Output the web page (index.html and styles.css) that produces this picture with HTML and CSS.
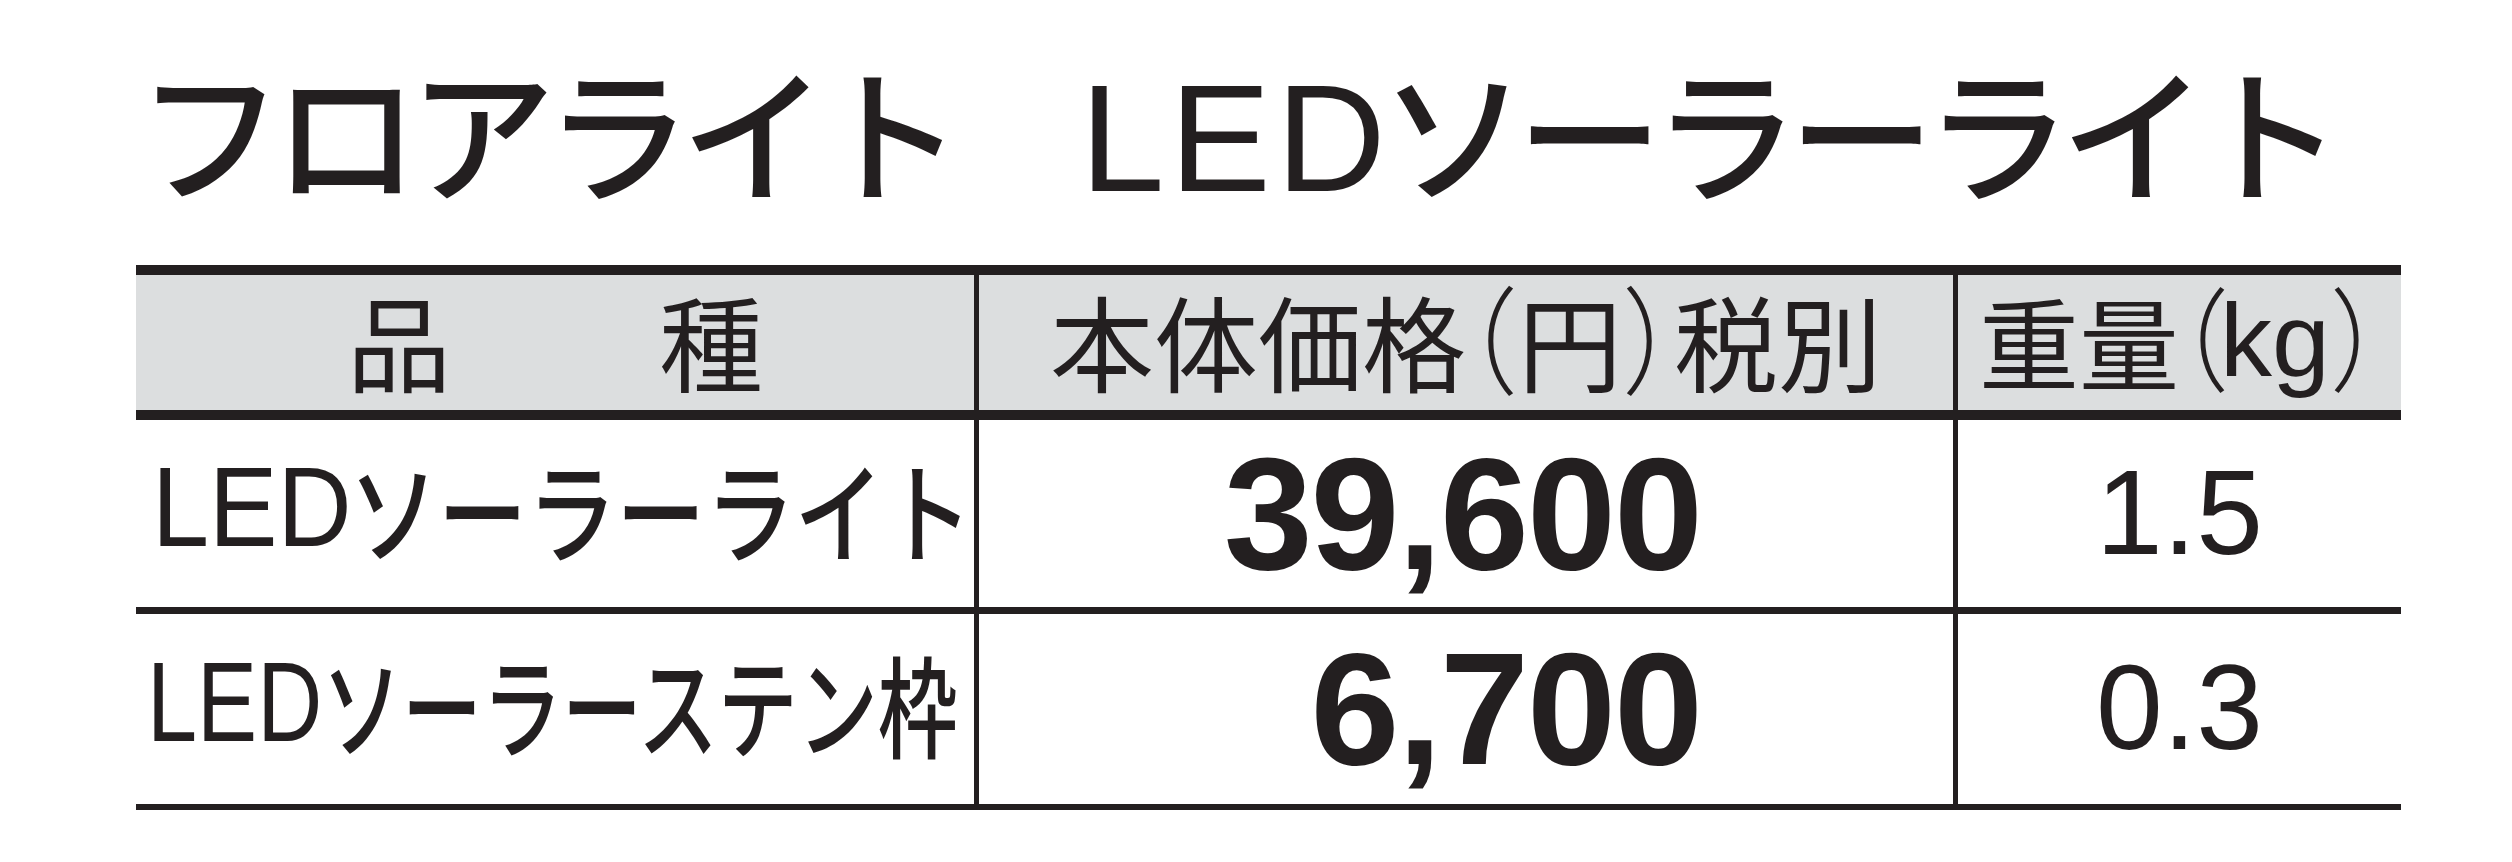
FILE: index.html
```html
<!DOCTYPE html>
<html lang="ja">
<head>
<meta charset="utf-8">
<title>フロアライト LEDソーラーライト</title>
<link rel="stylesheet" href="styles.css">
</head>
<body>
<main class="sheet">
  <h1 class="title"><span class="kana">フロアライト</span><span class="gap">　</span><span class="lat lat-title">LED</span><span class="kana">ソーラーライト</span></h1>
  <div class="spec">
    <div class="cell head col-name">品　　種</div>
    <div class="cell head col-price">本体価格<span class="paren">（</span>円<span class="paren">）</span>税別</div>
    <div class="cell head head-weight col-weight">重量<span class="paren paren-tight">（</span><span class="lat lat-kg">kg</span><span class="paren">）</span></div>

    <div class="cell name row-first"><span class="lat lat-name lat-name-a">LED</span><span class="fit fit-a">ソーラーライト</span></div>
    <div class="cell price row-first col-price">39,600</div>
    <div class="cell weight row-first col-weight">1.5</div>

    <div class="cell name row-last"><span class="lat lat-name lat-name-b">LED</span><span class="fit fit-b">ソーラーステン枠</span></div>
    <div class="cell price row-last col-price">6,700</div>
    <div class="cell weight row-last col-weight">0.3</div>
  </div>
</main>
</body>
</html>
```

FILE: styles.css
```css
html, body {
  margin: 0;
  padding: 0;
  background: #ffffff;
}

body {
  color: #231f20;
  font-family: "Noto Sans CJK JP", "Noto Sans", sans-serif;
}

.sheet {
  width: 2512px;
  height: 862px;
  padding-left: 136px;
  box-sizing: border-box;
  overflow: hidden;
}

/* Latin runs set in a Helvetica-like face; zero line-height keeps the CJK line box */
.lat {
  font-family: "Liberation Sans", Arial, sans-serif;
  font-weight: 400;
  line-height: 0;
}

/* ---------- title ---------- */
.title {
  margin: 0;
  padding: 55px 0 0 1px;
  height: 209px;
  box-sizing: border-box;
  font-size: 146px;
  font-weight: 500;
  line-height: 146px;
  white-space: nowrap;
}

.kana {
  letter-spacing: -10px;
}

.gap {
  letter-spacing: -19px;
}

.lat-title {
  font-size: 152px;
  letter-spacing: 5px;
  margin-right: -10px;
}

/* ---------- table ---------- */
.spec {
  display: grid;
  grid-template-columns: 838px 979px 448px;
  grid-template-rows: 145px 194px 190px;
  width: 2265px;
  border-top: 10px solid #231f20;
  border-bottom: 6px solid #231f20;
  margin-top: 56px;
}

.cell {
  display: flex;
  align-items: center;
  box-sizing: border-box;
  white-space: nowrap;
}

.col-price,
.col-weight {
  border-left: 5px solid #231f20;
}

.head {
  justify-content: center;
  padding-bottom: 6px;
  background: #dcdedf;
  border-bottom: 10px solid #231f20;
  font-size: 104px;
  font-weight: 400;
  line-height: 1;
}

.head-weight {
  font-size: 100px;
}

/* half-width alternates of the full-width brackets, drawn a little taller */
.paren {
  display: inline-block;
  font-feature-settings: "halt" 1;
  font-weight: 300;
  transform: translateY(-5px) scaleY(1.12);
}

.paren-tight {
  letter-spacing: -9px;
}

.lat-kg {
  font-size: 104px;
}

.row-first {
  border-bottom: 7px solid #231f20;
}

/* ---------- product names ---------- */
.name {
  padding-left: 16px;
  padding-bottom: 14px;
  font-size: 110px;
  font-weight: 500;
  line-height: 1;
}

.lat-name,
.fit {
  display: inline-block;
  transform-origin: left center;
}

.lat-name {
  font-size: 114px;
}

.lat-name-a {
  transform: scaleX(0.9);
  margin-right: -25px;
}

.lat-name-b {
  margin-left: -5px;
  transform: scaleX(0.79);
  margin-right: -47px;
}

.fit-a {
  transform: scaleX(0.81);
}

.fit-b {
  transform: scaleX(0.727);
}

/* ---------- prices & weights ---------- */
.price {
  justify-content: flex-end;
  padding-right: 252px;
  font-family: "Liberation Sans", Arial, sans-serif;
  font-size: 160px;
  font-weight: 700;
  letter-spacing: -2px;
  line-height: 1;
}

.weight {
  justify-content: center;
  padding-bottom: 4px;
  font-family: "Liberation Sans", Arial, sans-serif;
  font-size: 120px;
  font-weight: 400;
  line-height: 1;
}
```
